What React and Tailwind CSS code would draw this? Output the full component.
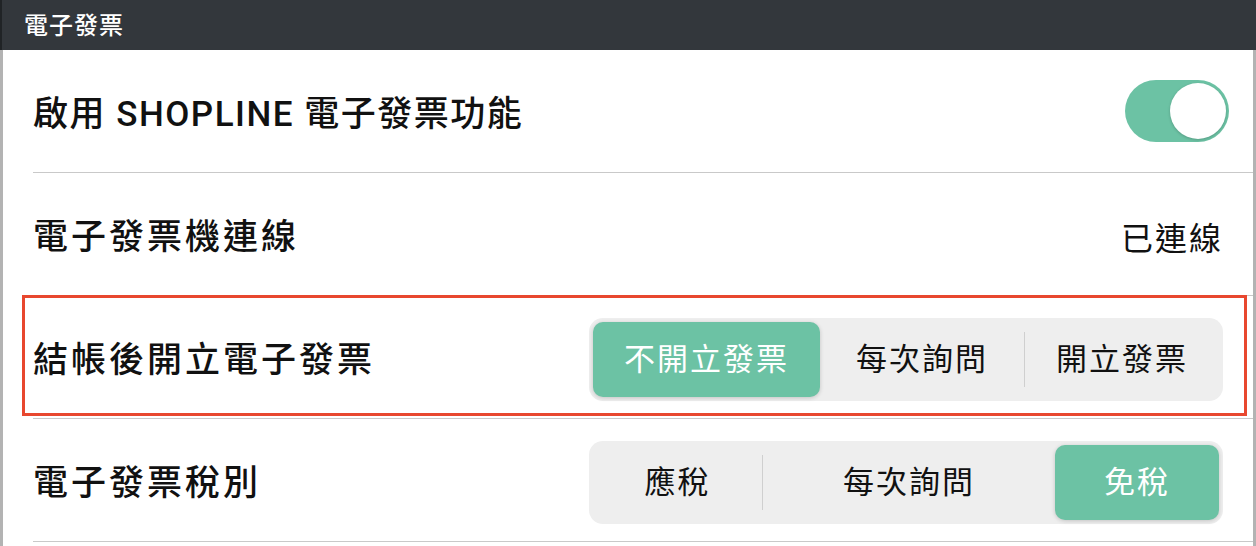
import React from 'react'

const FONT = { fontFamily: 'Roboto, "Noto Sans CJK TC", sans-serif' }

function Segmented({ items }) {
	return (
		<div className="flex items-center h-[83px] w-[634px] p-[4px] rounded-[14px] bg-[#eeeeee]">
			{items.map((it, i) => (
				<React.Fragment key={i}>
					{it.divider && <div className="w-px h-[55px] bg-[#cfcfcf]" />}
					<div
						className={`h-full flex items-center justify-center pt-[3px] text-[31px] tracking-[2px] ${
							it.active
								? 'bg-[#6cc2a4] text-white rounded-[10px] shadow-[0_1px_4px_rgba(0,0,0,0.18)]'
								: 'text-[#111]'
						}`}
						style={{ width: it.w }}
					>
						{it.label}
					</div>
				</React.Fragment>
			))}
		</div>
	)
}

function Row({ children, className = '' }) {
	return (
		<div className={`relative h-[123px] ml-[30px] pr-[30px] pt-[4px] border-b border-[#c9c9c9] flex items-center justify-between ${className}`}>
			{children}
		</div>
	)
}

function Label({ children }) {
	return <span className="pt-[5px] text-[35px] tracking-[3px] font-medium text-[#111]">{children}</span>
}

export default function App() {
	return (
		<div className="w-[1256px] h-[546px] bg-white overflow-hidden" style={FONT}>
			<div className="h-[50px] bg-[#33373c] flex items-center px-[22px] pt-[2px] border-l-[2px] border-[#202326]">
				<span className="text-white text-[24px] tracking-[1px] font-medium">電子發票</span>
			</div>
			<div className="h-[496px] border-l-[3px] border-r-[3px] border-[#b3b3b3]">
				<Row>
					<span className="pt-[5px] text-[35px] tracking-[1.5px] font-medium text-[#111]">啟用 SHOPLINE 電子發票功能</span>
					<div className="relative w-[104px] h-[62px] rounded-full bg-[#6cc2a4] -mr-[6px] -mt-[4px]">
						<div className="absolute right-[3px] top-[3px] w-[56px] h-[56px] rounded-full bg-white shadow-[0_1px_3px_rgba(0,0,0,0.2)]" />
					</div>
				</Row>
				<Row>
					<Label>電子發票機連線</Label>
					<span className="pt-[5px] text-[32px] tracking-[2px] text-[#111]">已連線</span>
				</Row>
				<Row>
					<div className="absolute -left-[11px] -top-[1px] right-[6px] h-[121px] border-[3px] border-[#e8472f]" />
					<Label>結帳後開立電子發票</Label>
					<Segmented
						items={[
							{ label: '不開立發票', w: 227, active: true },
							{ label: '每次詢問', w: 204 },
							{ label: '開立發票', w: 194, divider: true },
						]}
					/>
				</Row>
				<Row>
					<Label>電子發票稅別</Label>
					<Segmented
						items={[
							{ label: '應稅', w: 169 },
							{ label: '每次詢問', w: 292, divider: true },
							{ label: '免稅', w: 164, active: true },
						]}
					/>
				</Row>
			</div>
		</div>
	)
}
